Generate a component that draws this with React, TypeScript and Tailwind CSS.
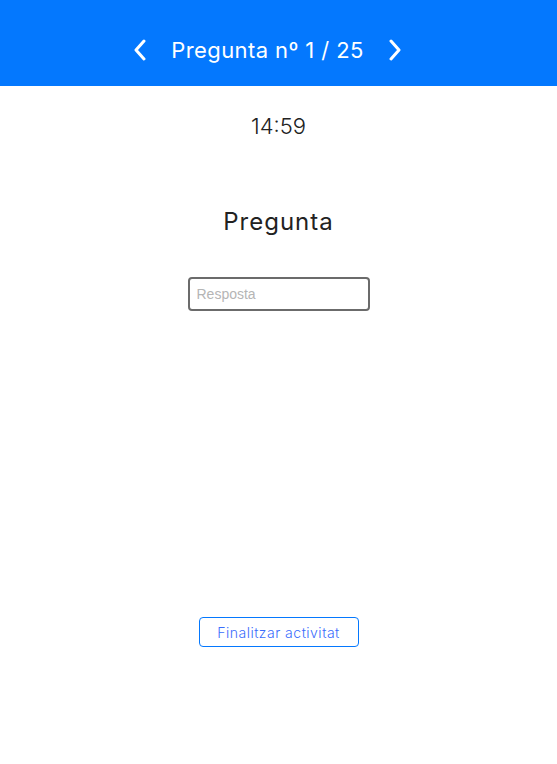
import React from "react";

const font = { fontFamily: "Inter, 'Noto Sans', sans-serif" };

export default function App() {
  return (
    <div className="w-[557px] h-[764px] bg-white flex flex-col" style={font}>
      <div className="h-[86px] bg-[#0478fe] flex items-center justify-center pr-[22px] pt-[14px]">
        <svg width="14" height="22" viewBox="0 0 14 22" fill="none" className="mr-[24px]">
          <path d="M11 2L3 11L11 20" stroke="white" strokeWidth="3" strokeLinecap="round" strokeLinejoin="round" />
        </svg>
        <span className="text-white text-[22px] font-normal tracking-[0.4px]">Pregunta nº 1 / 25</span>
        <svg width="14" height="22" viewBox="0 0 14 22" fill="none" className="ml-[24px]">
          <path d="M3 2L11 11L3 20" stroke="white" strokeWidth="3" strokeLinecap="round" strokeLinejoin="round" />
        </svg>
      </div>
      <div className="flex flex-col items-center">
        <div className="mt-[24px] text-[22px] font-light text-[#222]">14:59</div>
        <div className="mt-[61px] text-[24px] font-normal text-[#222] tracking-[1px]">Pregunta</div>
        <input
          placeholder="Resposta"
          className="mt-[37px] w-[182px] h-[34px] border-2 border-[#6b6b6b] rounded-[4px] px-[7px] text-[14px] placeholder:text-[#b5b5b5] outline-none"
          style={{ fontFamily: "'Liberation Sans', Arial, sans-serif" }}
        />
        <button className="mt-[306px] w-[160px] h-[30px] border border-[#0478fe] rounded-[4px] text-[14px] font-light text-[#3a6dfc] tracking-[0.5px]">
          Finalitzar activitat
        </button>
      </div>
    </div>
  );
}
